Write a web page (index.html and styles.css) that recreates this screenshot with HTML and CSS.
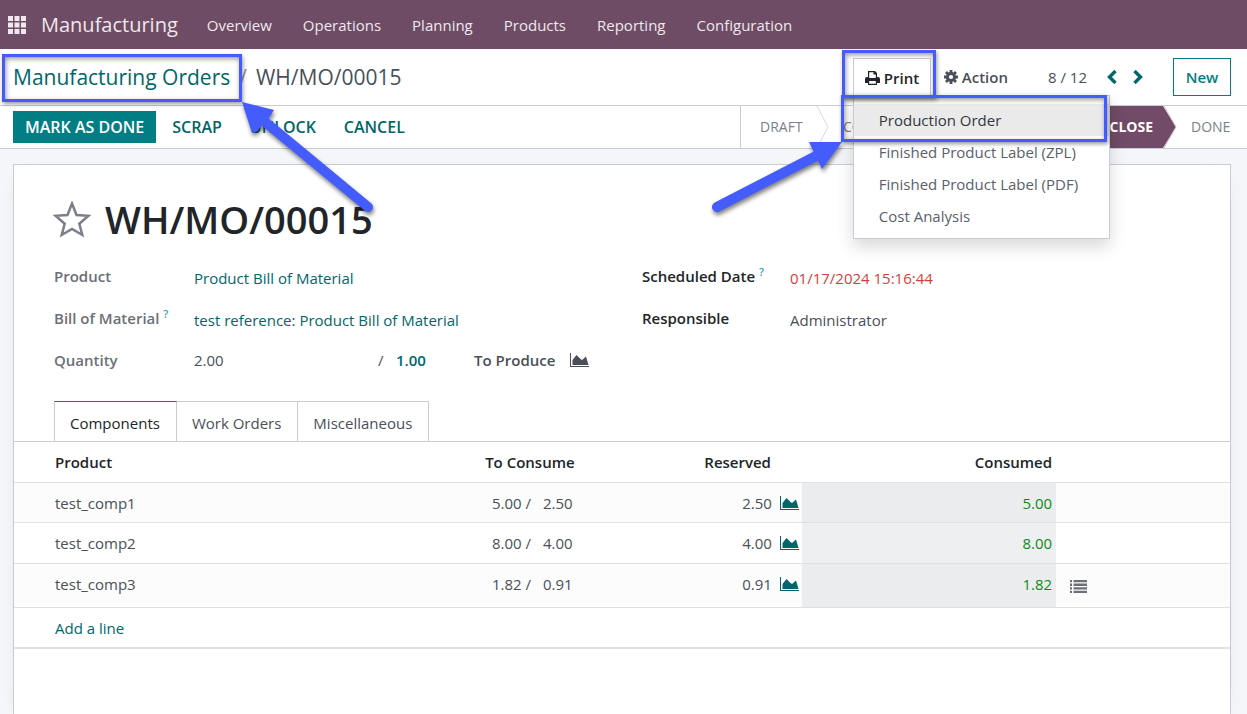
FILE: index.html
```html
<!DOCTYPE html>
<html lang="en">
<head>
<meta charset="utf-8">
<title>Manufacturing Orders - WH/MO/00015</title>
<link rel="stylesheet" href="styles.css">
</head>
<body>
<svg class="sprite" aria-hidden="true">
  <symbol id="area" viewBox="0 0 20 15"><path d="M0 0h1v13h18v1H0z"/><path d="M2.500 12V7L6.500 2l4 4 1.500 1L16 3.500l2.500 8.500z"/></symbol>
</svg>
<header class="navbar">
  <button class="apps" aria-label="Apps"><svg width="18" height="18" viewBox="0 0 18 18" fill="currentColor"><path d="M0 0h5v5H0zM6.500 0h5v5h-5zM13 0h5v5h-5zM0 6.500h5v5H0zM6.500 6.500h5v5h-5zM13 6.500h5v5h-5zM0 13h5v5H0zM6.500 13h5v5h-5zM13 13h5v5h-5z"/></svg></button>
  <a class="brand" href="#">Manufacturing</a>
  <nav class="menu">
    <a href="#">Overview</a><a href="#">Operations</a><a href="#">Planning</a><a href="#">Products</a><a href="#">Reporting</a><a href="#">Configuration</a>
  </nav>
</header>
<section class="control">
  <nav class="crumbs"><a class="crumb-link" href="#">Manufacturing Orders</a><span class="slash">/</span><span>WH/MO/00015</span></nav>
  <div class="control-right">
    <div class="print-wrap">
      <button class="print"><svg width="15" height="14" viewBox="0 0 15 14"><path fill="currentColor" fill-rule="evenodd" d="M3 0h7l2 2v4h1q2 0 2 2v4h-3v2H3v-2H0V8q0-2 2-2h1zM4.200 1.200V7h6.600V3.500H8.500V1.200zM4.200 10v2.800h6.600V10z"/></svg>Print</button>
      <div class="dropdown" role="menu">
        <button class="item active">Production Order</button>
        <button class="item">Finished Product Label (ZPL)</button>
        <button class="item">Finished Product Label (PDF)</button>
        <button class="item">Cost Analysis</button>
      </div>
      <div class="mark mark-print"></div>
      <div class="mark mark-item"></div>
    </div>
    <button class="action"><svg width="14" height="14" viewBox="-7 -7 14 14"><circle r="3.600" fill="none" stroke="currentColor" stroke-width="3"/><path stroke="currentColor" stroke-width="2.800" d="M0-7v3M0 7v-3M-7 0h3M7 0h-3M-5-5l2 2M5 5l-2-2M-5 5l2-2M5-5l-2 2"/></svg>Action</button>
    <span class="pager">8 / 12</span>
    <button class="arrow" aria-label="Previous"><svg width="10" height="14" viewBox="0 0 10 14"><path d="M8.500 1L2.500 7l6 6" fill="none" stroke="currentColor" stroke-width="3.400"/></svg></button>
    <button class="arrow" aria-label="Next"><svg width="10" height="14" viewBox="0 0 10 14"><path d="M1.500 1l6 6-6 6" fill="none" stroke="currentColor" stroke-width="3.400"/></svg></button>
    <button class="new">New</button>
  </div>
  <div class="mark mark-crumb"></div>
</section>
<section class="statusbar">
  <div class="buttons">
    <button class="btn primary">MARK AS DONE</button><button class="btn">SCRAP</button><button class="btn">UNLOCK</button><button class="btn">CANCEL</button>
  </div>
  <div class="stages">
    <span class="stage">DRAFT</span>
    <svg class="chev" width="14" height="42" viewBox="0 0 14 42"><path d="M1 0l11 21L1 42" fill="none" stroke="#d8dadd"/></svg>
    <span class="stage confirmed">CONFIRMED</span>
    <span class="stage current">TO CLOSE</span>
    <svg class="chev" width="14" height="42" viewBox="0 0 14 42"><path d="M0 0l13 21L0 42" fill="#714b67"/><path d="M1 0l12 21L1 42" fill="none" stroke="#c9c5cd"/></svg>
    <span class="stage done">DONE</span>
  </div>
</section>
<main class="content">
  <div class="sheet">
    <div class="title">
      <button class="star" aria-label="Priority"><svg width="38" height="37" viewBox="0 0 38 37"><path d="M19 2.500l4.500 11.500 12 .8-9.200 8 3 11.200L19 28l-10.300 6 3-11.200-9.200-8 12-.8z" fill="none" stroke="#7c7f89" stroke-width="2.500"/></svg></button>
      <h1>WH/MO/00015</h1>
    </div>
    <div class="form">
      <div class="group left">
        <span class="label muted">Product</span><a class="value" href="#">Product Bill of Material</a>
        <span class="label muted">Bill of Material <sup>?</sup></span><a class="value" href="#">test reference: Product Bill of Material</a>
        <span class="label muted">Quantity</span>
        <span class="qty"><span class="amount">2.00</span><span class="per">/</span><b>1.00</b><span class="produce">To Produce</span><svg width="20" height="15" fill="currentColor"><use href="#area"/></svg></span>
      </div>
      <div class="group right">
        <span class="label">Scheduled Date <sup>?</sup></span><span class="value late">01/17/2024 15:16:44</span>
        <span class="label">Responsible</span><span class="value">Administrator</span>
      </div>
    </div>
    <div class="tabs" role="tablist">
      <button class="tab selected" role="tab">Components</button><button class="tab" role="tab">Work Orders</button><button class="tab" role="tab">Miscellaneous</button>
    </div>
    <table class="lines">
      <colgroup><col class="c-product"><col class="c-consume"><col class="c-reserved"><col class="c-consumed"><col></colgroup>
      <thead><tr><th class="first">Product</th><th class="con-head">To Consume</th><th class="res-head">Reserved</th><th>Consumed</th><th></th></tr></thead>
      <tbody>
        <tr><td class="first">test_comp1</td><td class="num"><span>5.00 /</span><span>2.50</span></td><td class="res">2.50<svg width="20" height="15"><use href="#area"/></svg></td><td class="used">5.00</td><td></td></tr>
        <tr><td class="first">test_comp2</td><td class="num"><span>8.00 /</span><span>4.00</span></td><td class="res">4.00<svg width="20" height="15"><use href="#area"/></svg></td><td class="used">8.00</td><td></td></tr>
        <tr class="tall"><td class="first">test_comp3</td><td class="num"><span>1.82 /</span><span>0.91</span></td><td class="res">0.91<svg width="20" height="15"><use href="#area"/></svg></td><td class="used">1.82</td><td class="detail"><button class="list" aria-label="Details"><svg width="17" height="13" viewBox="0 0 17 13" fill="currentColor"><path d="M0 0h2v2.300H0zM0 3.600h2v2.300H0zM0 7.200h2v2.300H0zM0 10.700h2V13H0zM3.500 0H17v2.300H3.500zM3.500 3.600H17v2.300H3.500zM3.500 7.200H17v2.300H3.500zM3.500 10.700H17V13H3.500z"/></svg></button></td></tr>
        <tr class="add"><td class="first" colspan="5"><a href="#">Add a line</a></td></tr>
      </tbody>
    </table>
  </div>
</main>
<svg class="pointers" width="1247" height="714" viewBox="0 0 1247 714" aria-hidden="true">
  <g fill="#445cfc" stroke="#445cfc">
    <path stroke="none" d="M242 102l32 8-5 8-13 14-4 1z"/>
    <path d="M264 121L368 207" stroke-width="10" stroke-linecap="round"/>
    <path stroke="none" d="M842 142l-20 27-13-27z"/>
    <path d="M717 207L820 154" stroke-width="10" stroke-linecap="round"/>
  </g>
</svg>
</body>
</html>
```
FILE: styles.css
```css
* { box-sizing: border-box; }
body { margin: 0; min-height: 100vh; display: flex; flex-direction: column; position: relative; overflow: hidden; font: 15px/22px "Open Sans", "Noto Sans", sans-serif; color: #4a4f59; background: #fff; }
a { color: #01666b; text-decoration: none; }
button { font: inherit; color: inherit; background: none; border: 0; padding: 0; margin: 0; }
svg { display: block; flex: none; }
.sprite { position: absolute; width: 0; height: 0; }
.navbar { height: 49px; flex: none; display: flex; align-items: center; padding: 0 8px; background: #6f4c65; color: #eee8ec; }
.navbar a { color: inherit; }
.brand { font-size: 20px; margin: 0 29px 0 15px; }
.menu { display: flex; gap: 31px; }
.control { height: 57px; flex: none; display: flex; align-items: center; justify-content: space-between; padding: 0 16px 0 13px; border-bottom: 1px solid #c9ccd2; position: relative; }
.crumbs { display: flex; gap: 9px; font-size: 21px; line-height: 28px; }
.slash { color: #8f939b; }
.control-right { display: flex; align-items: center; font-weight: 600; }
.print-wrap { position: relative; z-index: 4; }
.print { display: flex; align-items: center; gap: 4px; height: 38px; width: 78px; padding-left: 11px; border: 1px solid #c9ccd2; border-bottom: 0; color: #212529; background: #fff; }
.dropdown { position: absolute; top: 37px; left: 0; width: 257px; padding: 8px 0 6px; background: #fff; border: 1px solid #c9ccd2; box-shadow: 0 8px 16px rgba(0,0,0,.15); font-weight: 400; }
.item { display: block; width: 100%; height: 32px; padding-left: 25px; text-align: left; color: #5b606b; }
.active { background: #eaeaea; color: #33373e; }
.action { display: flex; align-items: center; gap: 4px; margin-left: 13px; }
.pager { font-weight: 400; margin: 0 20px 0 40px; }
.arrow { color: #01666b; margin-right: 16px; }
.new { width: 58px; height: 38px; margin-left: 14px; border: 1px solid #017e84; color: #017e84; }
.mark { position: absolute; z-index: 5; border: 3px solid #445cfc; box-shadow: 1px 2px 4px rgba(0,0,0,.4), inset 1px 2px 5px rgba(0,0,0,.4); }
.mark-crumb { left: 2px; top: 5px; width: 240px; height: 48px; }
.mark-print { left: -11px; top: -8px; width: 94px; height: 48px; }
.mark-item { left: -12px; top: 37px; width: 266px; height: 47px; }
.statusbar { height: 43px; flex: none; display: flex; justify-content: space-between; padding-left: 13px; border-bottom: 1px solid #c9ccd2; }
.buttons { display: flex; align-items: center; gap: 4px; }
.btn { height: 32px; padding: 0 12px; color: #01666b; font-size: 16px; font-weight: 600; }
.primary { background: #017e84; color: #fff; }
.stages { width: 507px; display: flex; align-items: center; border-left: 1px solid #c9ccd2; font-size: 14px; color: #7c7f89; }
.stage { height: 42px; line-height: 42px; padding-left: 19px; }
.stage:first-child { width: 75px; }
.confirmed { flex: 1; padding-left: 13px; }
.current { padding: 0 10px 0 14px; background: #714b67; color: #fff; font-weight: 700; }
.done { width: 70px; padding-left: 14px; }
.content { flex: 1; padding: 15px 16px 0 13px; background: #f5f6fa; }
.sheet { min-height: 100%; height: 552px; background: #fff; border: 1px solid #c9ccd2; box-shadow: 0 5px 20px -15px rgba(0,0,0,.4); }
.title { display: flex; align-items: center; gap: 14px; padding: 26px 39px 0; }
.title h1 { margin: 0; font-size: 38px; line-height: 56px; font-weight: 600; color: #212529; }
.form { display: flex; padding: 8px 40px 0; }
.group { display: grid; grid-auto-rows: 42px; align-items: center; align-content: start; }
.left { width: 588px; grid-template-columns: 140px 1fr; }
.right { flex: 1; grid-template-columns: 148px 1fr; }
.label { font-weight: 600; color: #212529; }
.muted { color: #6c6f78; }
sup { font-size: 11px; line-height: 0; color: #3b9dbd; font-weight: 600; }
.value { padding-top: 3px; }
.late { color: #d23f3a; }
.qty { display: flex; align-items: center; }
.amount { width: 184px; }
.per { width: 18px; }
.qty b { width: 78px; color: #01666b; font-weight: 600; }
.produce { width: 96px; font-weight: 600; }
.tabs { display: flex; padding: 20px 40px 0; border-bottom: 1px solid #c9ccd2; }
.tab { height: 40px; padding: 3px 16px 0 15px; border: 1px solid #c9ccd2; border-width: 1px 1px 0 0; }
.selected { border-left-width: 1px; border-top-color: #714b67; color: #212529; }
.lines { width: 100%; table-layout: fixed; border-collapse: separate; border-spacing: 0; }
.c-product { width: 36.7%; } .c-consume { width: 9.9%; } .c-reserved { width: 18.2%; } .c-consumed { width: 20.9%; }
th, td { height: 41px; padding: 0 4px; border-bottom: 1px solid #dee0e4; text-align: right; }
th { font-weight: 600; color: #212529; }
.first { padding-left: 41px; text-align: left; }
.con-head { padding-right: 6px; }
.res-head { padding-right: 31px; }
tbody tr:nth-child(odd) td { background: #fcfcfc; }
tbody tr:first-child td { height: 40px; }
.tall td { height: 44px; padding-bottom: 4px; }
.num span { margin-left: 12px; }
.num { padding-right: 8px; }
.res { padding-right: 2px; }
.res svg { display: inline-block; vertical-align: -2px; margin-left: 8px; fill: #01666b; }
.lines .used { background: #eeeff1; color: #108a1c; }
.lines tr:nth-child(odd) .used { background: #ebecee; }
.tall .detail { text-align: left; padding-bottom: 2px; }
.list { margin-left: 10px; color: #6c6f78; vertical-align: middle; }
.add td { border-bottom: 2px solid #dee0e4; }
.pointers { position: absolute; left: 0; top: 0; z-index: 6; pointer-events: none; filter: drop-shadow(1px 3px 2px rgba(0,0,0,.5)); }
```
